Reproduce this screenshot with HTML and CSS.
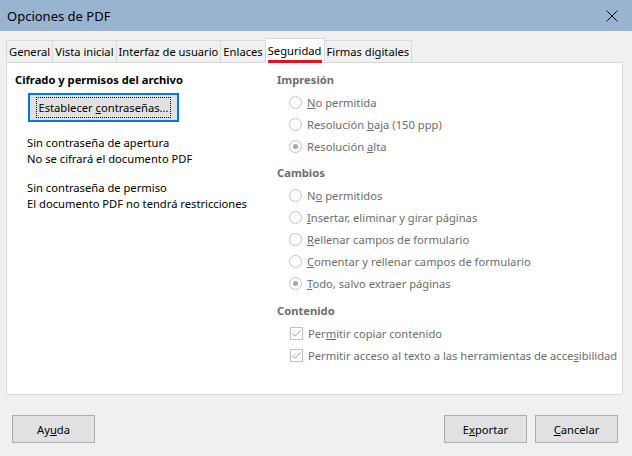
FILE: index.html
```html
<!DOCTYPE html>
<html lang="es">
<head>
  <meta charset="UTF-8" />
  <title>Opciones de PDF</title>
  <link rel="stylesheet" href="styles.css">
</head>
<body>
  <div class="titlebar">
    <span class="title">Opciones de PDF</span>
    <svg class="close" width="12" height="12" viewBox="0 0 12 12"><path d="M0.5 0.5 L11.5 11.5 M11.5 0.5 L0.5 11.5" stroke="#000" stroke-width="1" fill="none"/></svg>
  </div>

  <div class="tabs">
    <div class="tab">General</div>
    <div class="tab">Vista inicial</div>
    <div class="tab">Interfaz de usuario</div>
    <div class="tab">Enlaces</div>
    <div class="tab active"><span>Seguridad</span></div>
    <div class="tab">Firmas digitales</div>
  </div>

  <div class="panel">
    <div class="col-left">
      <div class="heading">Cifrado y permisos del archivo</div>
      <button class="btn focused"><span class="focus-ring">Establecer <u>c</u>ontraseñas...</span></button>
      <div class="note">Sin contraseña de apertura<br>No se cifrará el documento PDF</div>
      <div class="note">Sin contraseña de permiso<br>El documento PDF no tendrá restricciones</div>
    </div>

    <div class="col-right">
      <div class="group">
        <div class="group-title">Impresión</div>
        <div class="opt"><span class="radio"></span><span><u>N</u>o permitida</span></div>
        <div class="opt"><span class="radio"></span><span>Resolución <u>b</u>aja (150 ppp)</span></div>
        <div class="opt"><span class="radio checked"></span><span>Resolución <u>a</u>lta</span></div>
      </div>
      <div class="group">
        <div class="group-title">Cambios</div>
        <div class="opt"><span class="radio"></span><span>N<u>o</u> permitidos</span></div>
        <div class="opt"><span class="radio"></span><span><u>I</u>nsertar, eliminar y girar páginas</span></div>
        <div class="opt"><span class="radio"></span><span><u>R</u>ellenar campos de formulario</span></div>
        <div class="opt"><span class="radio"></span><span><u>C</u>omentar y rellenar campos de formulario</span></div>
        <div class="opt"><span class="radio checked"></span><span><u>T</u>odo, salvo extraer páginas</span></div>
      </div>
      <div class="group">
        <div class="group-title">Contenido</div>
        <div class="opt"><span class="check"><svg width="11" height="11" viewBox="0 0 11 11"><path d="M1.5 5.5 L4.2 8.2 L9.5 2.5" stroke="#a3a3a3" stroke-width="1" fill="none"/></svg></span><span>Per<u>m</u>itir copiar contenido</span></div>
        <div class="opt"><span class="check"><svg width="11" height="11" viewBox="0 0 11 11"><path d="M1.5 5.5 L4.2 8.2 L9.5 2.5" stroke="#a3a3a3" stroke-width="1" fill="none"/></svg></span><span>Permitir acceso al texto a las herramientas de acce<u>s</u>ibilidad</span></div>
      </div>
    </div>
  </div>

  <div class="footer">
    <button class="btn"><span>Ay<u>u</u>da</span></button>
    <div class="footer-right">
      <button class="btn"><span>E<u>x</u>portar</span></button>
      <button class="btn"><span><u>C</u>ancelar</span></button>
    </div>
  </div>
</body>
</html>
```

FILE: styles.css
```css
body {
  margin: 0;
  background: #f0f0f0;
  font-family: 'Noto Sans', sans-serif;
  font-size: 11.2px;
  color: #000;
  width: 632px;
  height: 456px;
  overflow: hidden;
}
.titlebar {
  height: 31px;
  background: #99b4d1;
  display: flex;
  align-items: center;
  justify-content: space-between;
  padding: 0 14px 0 7px;
}
.title {
  font-size: 13px;
}
.tabs {
  display: flex;
  align-items: flex-end;
  margin: 7px 0 0 6px;
  height: 24px;
}
.tab {
  height: 21px;
  line-height: 22px;
  padding: 0 2px;
  border: 1px solid #d9d9d9;
  border-bottom: none;
  border-left: none;
  background: #f0f0f0;
}
.tab:first-child {
  border-left: 1px solid #d9d9d9;
}
.tab.active {
  height: 24px;
  line-height: 23px;
  background: #fff;
  border-left: 1px solid #d9d9d9;
  margin-left: -1px;
  margin-bottom: -1px;
  position: relative;
  z-index: 1;
}
.tab.active span {
  display: inline-block;
  line-height: 19px;
  border-bottom: 3px solid #e81123;
}
.panel {
  margin: 0 9px 0 6px;
  background: #fff;
  border: 1px solid #d9d9d9;
  display: flex;
  padding-top: 6px;
  box-sizing: border-box;
  height: 333px;
}
.col-left {
  width: 262px;
  padding-left: 8px;
  flex-shrink: 0;
}
.heading {
  font-weight: bold;
  line-height: 22px;
}
.btn {
  font-family: inherit;
  font-size: 11.2px;
  background: #e1e1e1;
  border: 1px solid #adadad;
  height: 28px;
  width: 83px;
  padding: 0;
  color: #000;
}
.btn.focused {
  display: block;
  margin: 2px 0 0 13px;
  width: 151px;
  height: 29px;
  border: 2px solid #0078d7;
}
.focus-ring {
  outline: 1px dotted #000;
  padding: 2px 1px;
}
.note {
  margin: 13px 0 0 12px;
  line-height: 16px;
}
.col-right {
  flex: 1;
  color: #6d6d6d;
  white-space: nowrap;
}
.group + .group {
  margin-top: 5px;
}
.group:last-child {
  margin-top: 6px;
}
.group-title {
  font-weight: bold;
  line-height: 22px;
}
.opt {
  display: flex;
  align-items: center;
  height: 22px;
  padding-left: 12px;
  gap: 5px;
}
.radio {
  width: 11px;
  height: 11px;
  border: 1px solid #c2c2c2;
  border-radius: 50%;
  background: #fff;
  display: flex;
  align-items: center;
  justify-content: center;
}
.radio.checked::after {
  content: "";
  width: 5px;
  height: 5px;
  border-radius: 50%;
  background: #a6a6a6;
}
.check {
  width: 11px;
  height: 11px;
  border: 1px solid #c2c2c2;
  background: #fff;
  display: flex;
  margin-left: 1px;
}
.footer {
  display: flex;
  justify-content: space-between;
  margin-top: 20px;
  padding: 0 14px 0 12px;
}
.footer-right {
  display: flex;
  gap: 8px;
}
```
